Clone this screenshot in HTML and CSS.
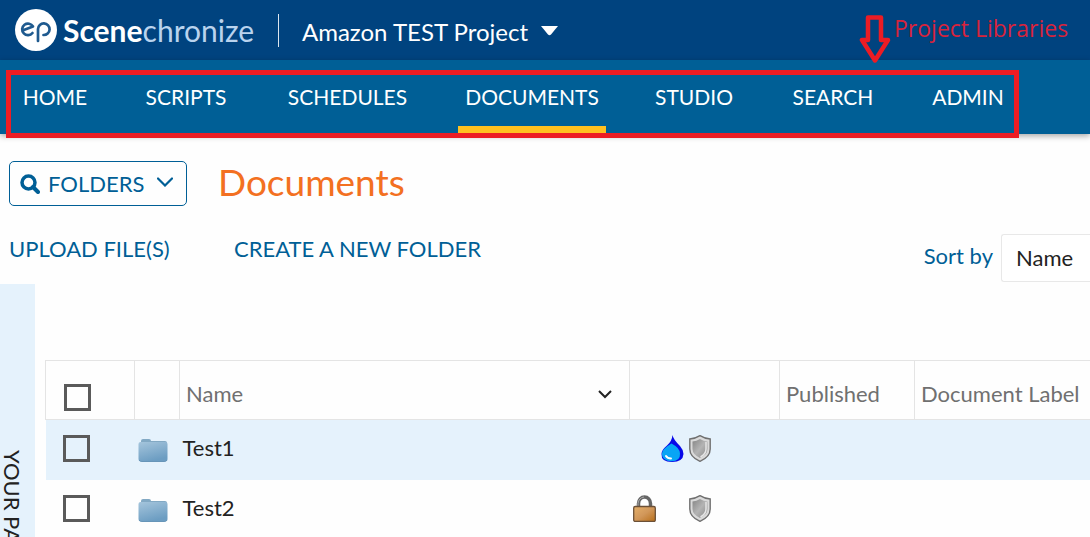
FILE: index.html
```html
<!DOCTYPE html>
<html lang="en">
<head>
<meta charset="utf-8">
<title>Scenechronize - Documents</title>
<link rel="stylesheet" href="styles.css">
</head>
<body>
<svg class="defs" aria-hidden="true">
  <defs>
    <linearGradient id="folder-fill" x1="0" y1="0" x2="0.4" y2="1"><stop offset="0" stop-color="#a5c5dc"/><stop offset="1" stop-color="#6c9dc2"/></linearGradient>
    <linearGradient id="lock-fill" x1="0" y1="0" x2="1" y2="1"><stop offset="0" stop-color="#e5b06a"/><stop offset="0.5" stop-color="#d1975a"/><stop offset="1" stop-color="#b86e18"/></linearGradient>
    <linearGradient id="shield-fill" x1="0" y1="0" x2="1" y2="1"><stop offset="0" stop-color="#858585"/><stop offset="0.5" stop-color="#b4b4b4"/><stop offset="1" stop-color="#898989"/></linearGradient>
    <symbol id="folder" viewBox="0 0 30 24">
      <path d="M3 6V3q0-2 2-2h6q2 0 2 2h14q2 0 2 2v3H3z" fill="#82a9c4"/>
      <path d="M0.5 6q0-2 2-2h25q2 0 2 2v15q0 2.500-2.500 2.500h-24q-2.500 0-2.500-2.500z" fill="url(#folder-fill)"/>
      <path d="M1 22q1 1.500 3 1.500h22q2 0 3-1.500" fill="none" stroke="#6795b8"/>
    </symbol>
    <symbol id="shield" viewBox="0 0 22 27">
      <path d="M11 .7Q6.500 3.600.8 4V14q0 8 10.200 12.300Q21.200 22 21.200 14V4Q15.500 3.600 11 .7z" fill="#dadada" stroke="#707070" stroke-width="1.400"/>
      <path d="M11 4Q7.500 6 3.500 6.500V14q0 5.500 7.500 9Q18.500 19.500 18.500 14V6.500Q14.500 6 11 4z" fill="url(#shield-fill)"/>
      <path d="M17 7v7q0 5-5.500 8" fill="none" stroke="#e6e6e6" stroke-width="1.500"/>
    </symbol>
  </defs>
</svg>
<header class="topbar">
  <a class="brand" href="#">
    <svg class="brand-mark" viewBox="0 0 42 42" aria-hidden="true">
      <circle cx="21" cy="21" r="21" fill="#fff"/>
      <path d="M7.500 21.500L18 17.500A5.800 5.800 0 1 0 17.500 24M23 32V20A5.800 5.800 0 1 1 28.500 26" fill="none" stroke="#1f5a8f" stroke-width="2.700" stroke-linecap="round" stroke-linejoin="round"/>
    </svg>
    <span class="brand-name"><b>Scene</b>chronize</span>
  </a>
  <button class="project" type="button">Amazon TEST Project
    <svg class="caret" viewBox="0 0 17 10" aria-hidden="true"><path d="M0 0h17L10 8.500q-1.500 1.500-3 0z" fill="#fff"/></svg>
  </button>
</header>
<nav class="mainnav">
  <a href="#">HOME</a>
  <a href="#">SCRIPTS</a>
  <a href="#">SCHEDULES</a>
  <a href="#" class="active" aria-current="page">DOCUMENTS</a>
  <a href="#">STUDIO</a>
  <a href="#">SEARCH</a>
  <a href="#">ADMIN</a>
  <div class="callout-box"></div>
</nav>
<div class="callout">
  <svg class="callout-arrow" viewBox="0 0 32 49" aria-hidden="true"><path d="M9 3.500H22V26H29L16 46.500L3 26H9z" fill="none" stroke="#ec1c24" stroke-width="4.500" stroke-linejoin="round"/></svg>
  <span>Project Libraries</span>
</div>
<main>
  <div class="heading">
    <button class="folders" type="button">
      <svg class="search-icon" viewBox="0 0 20 20" aria-hidden="true"><circle cx="8.500" cy="8.500" r="6.500" fill="none" stroke="#005f96" stroke-width="3.500"/><path d="M13 13l5 5" stroke="#005f96" stroke-width="4" stroke-linecap="round"/></svg>
      FOLDERS
      <svg class="folders-chevron" viewBox="0 0 16 10" aria-hidden="true"><path d="M1 1.500l7 7 7-7" fill="none" stroke="#005f96" stroke-width="2.200" stroke-linecap="round"/></svg>
    </button>
    <h1>Documents</h1>
  </div>
  <div class="actions">
    <a href="#">UPLOAD FILE(S)</a>
    <a href="#">CREATE A NEW FOLDER</a>
    <div class="sort">
      <label for="sort">Sort by</label>
      <select id="sort"><option>Name</option></select>
    </div>
  </div>
  <div class="workspace">
    <aside class="side">YOUR PAGES</aside>
    <table class="files">
      <colgroup><col class="c-check"><col class="c-icon"><col class="c-name"><col class="c-flags"><col class="c-pub"><col></colgroup>
      <thead>
        <tr>
          <th><input type="checkbox" aria-label="Select all"></th>
          <th></th>
          <th><span class="sortable">Name <svg class="th-chevron" viewBox="0 0 14 9" aria-hidden="true"><path d="M1 1l6 6 6-6" fill="none" stroke="#222" stroke-width="2"/></svg></span></th>
          <th></th>
          <th>Published</th>
          <th>Document Label</th>
        </tr>
      </thead>
      <tbody>
        <tr class="selected">
          <td><input type="checkbox" aria-label="Select Test1"></td>
          <td><svg class="folder"><use href="#folder"/></svg></td>
          <td>Test1</td>
          <td><div class="flags"><span></span>
            <svg class="drop" viewBox="0 0 23 27" role="img" aria-label="Watermark"><path d="M11.500 0Q12 4 19 11q3.500 4 3.500 8Q22 27 11 27T.5 19Q.5 15 6 10.500 11 6 11.500 0z" fill="#0808e8"/><path d="M10.500 8.500Q.8 14 .8 19 1.500 26.300 10.500 26.300T19 18.500Q19 13 10.500 8.500z" fill="#08a5f5"/><path d="M5 21q1.500 2.500 5 2.500" fill="none" stroke="#fff" stroke-width="2" stroke-linecap="round"/></svg>
            <svg class="shield"><use href="#shield"/></svg></div></td>
          <td></td><td></td>
        </tr>
        <tr>
          <td><input type="checkbox" aria-label="Select Test2"></td>
          <td><svg class="folder"><use href="#folder"/></svg></td>
          <td>Test2</td>
          <td><div class="flags">
            <svg class="lock" viewBox="0 0 23 27" role="img" aria-label="Locked"><path d="M5.500 12V8.500a6 6.500 0 0 1 12 0V12" fill="none" stroke="#666" stroke-width="3.500"/><path d="M5 11V8.500a6.500 7 0 0 1 6-6.500" fill="none" stroke="#aaa"/><rect x=".7" y="11.500" width="21.600" height="15" rx="1.500" fill="url(#lock-fill)" stroke="#6b5037" stroke-width="1.300"/></svg>
            <span></span>
            <svg class="shield"><use href="#shield"/></svg></div></td>
          <td></td><td></td>
        </tr>
      </tbody>
    </table>
  </div>
</main>
</body>
</html>
```

FILE: styles.css
```css
* { box-sizing: border-box; }
html, body { height: 100%; }
body {
  margin: 0;
  display: flex;
  flex-direction: column;
  position: relative;
  overflow: hidden;
  background: #fefefe;
  color: #222;
  font: 22px/28px Lato, "Noto Sans", sans-serif;
}
a { color: inherit; text-decoration: none; }
button, select, input { font: inherit; color: inherit; margin: 0; }
button { background: none; border: 0; padding: 0; }
.defs { position: absolute; width: 0; height: 0; }

.topbar {
  flex: none;
  display: flex;
  align-items: center;
  height: 60px;
  padding-left: 15px;
  background: #00437f;
  color: #fff;
}
.brand { display: flex; align-items: center; gap: 6px; width: 264px; height: 33px; border-right: 1px solid #dce6ef; }
.brand-mark { width: 42px; height: 42px; }
.brand-name { font-size: 30px; color: #b9d3ee; }
.brand-name b { color: #fff; font-weight: 700; }
.project { display: flex; align-items: center; gap: 13px; margin-left: 23px; padding-top: 4px; font-size: 24px; }
.caret { width: 17px; height: 10px; margin-bottom: 2px; }

.mainnav {
  flex: none;
  display: grid;
  grid-template-columns: 78px 102px 139px 148px 94px 102px 86px;
  column-gap: 41px;
  position: relative;
  height: 74px;
  padding-left: 16px;
  background: #005f96;
  color: #fff;
  font-size: 21px;
  box-shadow: 0 2px 6px rgba(0, 0, 0, .35);
}
.mainnav a { padding-top: 23px; text-align: center; white-space: nowrap; }
.mainnav .active { border-bottom: 8px solid #ffc020; }
.callout-box { position: absolute; left: 6px; top: 10px; width: 1013px; height: 68px; border: 5px solid #ec1c24; }
.callout {
  position: absolute;
  left: 859px;
  top: 14px;
  display: flex;
  gap: 3px;
  color: #d8233c;
  font: 23px/28px "Open Sans", "Noto Sans", sans-serif;
}
.callout-arrow { width: 32px; height: 49px; }

main { flex: 1; display: flex; flex-direction: column; min-height: 0; }
.heading { display: flex; align-items: center; gap: 31px; padding: 27px 9px 0; }
.folders {
  display: flex;
  align-items: center;
  width: 178px;
  height: 45px;
  padding: 0 13px 0 10px;
  border: 1px solid #005f96;
  border-radius: 5px;
  color: #005f96;
}
.search-icon { width: 20px; height: 20px; margin-right: 8px; }
.folders-chevron { width: 16px; height: 10px; margin: 0 0 4px auto; }
h1 { margin: 0; padding-bottom: 4px; color: #f37021; font-size: 37px; line-height: 40px; font-weight: 400; }
.actions { display: flex; padding: 28px 0 0 9px; color: #005f96; }
.actions > a { width: 225px; padding-top: 1px; white-space: nowrap; }
.actions > a + a { width: 260px; }
.sort { display: flex; align-items: center; gap: 8px; margin-left: auto; height: 48px; }
.sort label { padding-bottom: 5px; }
.sort select {
  appearance: none;
  width: 89px;
  height: 48px;
  padding: 0 0 0 14px;
  border: 1px solid #e8e8e8;
  border-right: 0;
  border-radius: 3px 0 0 3px;
  background: #fff;
  color: #222;
}

.workspace { flex: 1; display: flex; align-items: flex-start; gap: 10px; padding-top: 2px; min-height: 0; }
.side {
  flex: none;
  align-self: stretch;
  width: 35px;
  padding: 166px 0 0;
  background: #e5f2fc;
  writing-mode: vertical-rl;
  line-height: 46px;
  overflow: hidden;
  white-space: nowrap;
}
.files { flex: 1; margin-top: 76px; table-layout: fixed; border-collapse: collapse; }
.c-check { width: 89px; }
.c-icon { width: 45px; }
.c-name { width: 450px; }
.c-flags { width: 150px; }
.c-pub { width: 135px; }
th {
  height: 59px;
  padding: 8px 6px 0;
  border: 1px solid #e4e4e4;
  border-right: 0;
  color: #707070;
  font-weight: 400;
  text-align: left;
  white-space: nowrap;
}
td { height: 60px; padding: 0 3px 3px; }
th:first-child { padding-left: 18px; }
td:first-child { padding-left: 17px; }
.selected { background: #e5f2fc; }
.files input {
  appearance: none;
  display: block;
  width: 27px;
  height: 27px;
  border: 3px solid #5a5a5a;
}
th input { margin-top: 6px; }
.sortable { display: flex; align-items: center; justify-content: space-between; padding-right: 11px; }
.th-chevron { width: 14px; height: 9px; }
.folder { display: block; width: 30px; height: 24px; margin-top: 3px; }
.flags { display: grid; grid-template-columns: 23px 23px 22px; column-gap: 5px; }
.flags svg { width: 100%; height: 27px; }
```
